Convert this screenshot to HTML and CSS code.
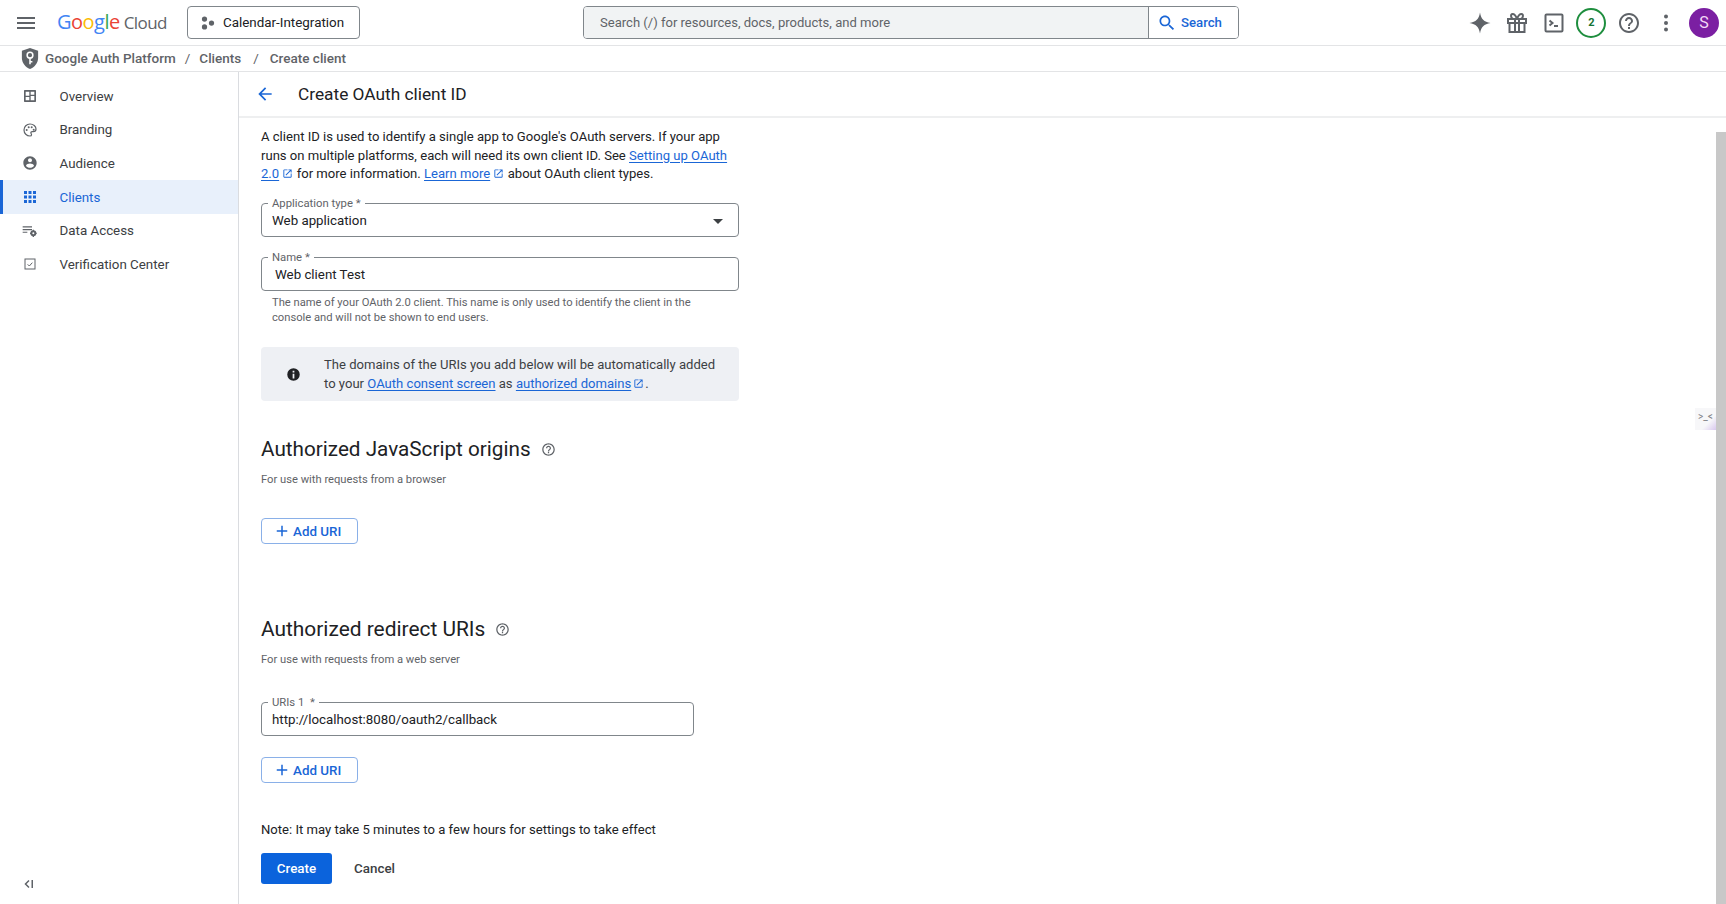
FILE: index.html
```html
<!DOCTYPE html>
<html lang="en">
<head>
<meta charset="utf-8">
<title>Create OAuth client ID</title>
<link rel="stylesheet" href="styles.css">
</head>
<body>
<svg class="defs" width="0" height="0" aria-hidden="true">
  <symbol id="i-open" viewBox="0 0 24 24"><path d="M19 19H5V5h7V3H5c-1.11 0-2 .9-2 2v14c0 1.1.89 2 2 2h14c1.1 0 2-.9 2-2v-7h-2v7zM14 3v2h3.59l-9.83 9.83 1.41 1.41L19 6.41V10h2V3h-7z"/></symbol>
  <symbol id="i-help" viewBox="0 0 24 24"><path d="M11 18h2v-2h-2v2zm1-16C6.48 2 2 6.48 2 12s4.48 10 10 10 10-4.48 10-10S17.52 2 12 2zm0 18c-4.41 0-8-3.59-8-8s3.59-8 8-8 8 3.59 8 8-3.59 8-8 8zm0-14c-2.21 0-4 1.79-4 4h2c0-1.1.9-2 2-2s2 .9 2 2c0 2-3 1.75-3 5h2c0-2.25 3-2.5 3-5 0-2.21-1.79-4-4-4z"/></symbol>
  <symbol id="i-plus" viewBox="0 0 24 24"><path d="M19 13h-6v6h-2v-6H5v-2h6V5h2v6h6v2z"/></symbol>
</svg>

<header class="topbar">
  <svg class="ic ic-menu" viewBox="0 0 24 24"><path d="M3 18h18v-2H3v2zm0-5h18v-2H3v2zm0-7v2h18V6H3z"/></svg>
  <div class="logo"><span class="lb">G</span><span class="lr">o</span><span class="ly">o</span><span class="lb">g</span><span class="lg">l</span><span class="lr">e</span><span class="cloud">Cloud</span></div>
  <button class="project">
    <svg class="ic-proj" viewBox="0 0 16 16"><circle cx="4" cy="3.500" r="3"/><circle cx="12" cy="8" r="3"/><circle cx="4" cy="12.500" r="3"/></svg>
    <span>Calendar-Integration</span>
  </button>
  <div class="search">
    <div class="search-input">Search (/) for resources, docs, products, and more</div>
    <button class="search-btn">
      <svg viewBox="0 0 24 24"><path d="M15.5 14h-.79l-.28-.27C15.41 12.59 16 11.11 16 9.5 16 5.91 13.09 3 9.5 3S3 5.91 3 9.5 5.91 16 9.5 16c1.61 0 3.09-.59 4.23-1.57l.27.28v.79l5 4.99L20.49 19l-4.99-5zm-6 0C7.01 14 5 11.99 5 9.5S7.01 5 9.5 5 14 7.01 14 9.5 11.99 14 9.5 14z"/></svg>
      <span>Search</span>
    </button>
  </div>
  <div class="tools">
    <svg class="tool" viewBox="0 0 24 24"><path d="M12 1.500C13 8 16 11 22.500 12 16 13 13 16 12 22.500 11 16 8 13 1.500 12 8 11 11 8 12 1.500Z"/></svg>
    <svg class="tool tool-line" viewBox="0 0 24 24"><path d="M3 8h18v4H3zM4.500 12v9h15v-9M10 8v13M14 8v13M12 8c-1-3-2.500-5-4.500-5C5.500 3 5.500 7 8 8M12 8c1-3 2.500-5 4.500-5 2 0 2 4-.5 5"/></svg>
    <svg class="tool tool-line" viewBox="0 0 24 24"><rect x="3.500" y="3.500" width="17" height="17" rx="1"/><path d="M7.500 9.500l3 2.500-3 2.500M12 15h4"/></svg>
    <div class="badge">2</div>
    <svg class="tool" viewBox="0 0 24 24"><use href="#i-help"/></svg>
    <svg class="tool" viewBox="0 0 24 24"><circle cx="12" cy="5.500" r="2"/><circle cx="12" cy="12" r="2"/><circle cx="12" cy="18.500" r="2"/></svg>
    <div class="avatar">S</div>
  </div>
</header>

<nav class="crumbs">
  <svg class="shield" viewBox="0 0 18 22"><path d="M9 0l8.500 3v7.500c0 5-3.500 9.500-8.500 11.500C4 20 .5 15.500.5 10.500V3z" fill="#5f6368"/><circle cx="9" cy="7.500" r="3" fill="none" stroke="#fff" stroke-width="1.600"/><path d="M9 10.500V17M9 14.500h2.500" fill="none" stroke="#fff" stroke-width="1.600"/></svg>
  <span class="crumb crumb-first">Google Auth Platform</span>
  <span class="sep sep-first">/</span>
  <span class="crumb">Clients</span>
  <span class="sep sep-second">/</span>
  <span class="crumb">Create client</span>
</nav>

<div class="layout">
  <aside class="side">
    <ul class="side-list">
      <li class="side-item">
        <svg class="side-ic" viewBox="0 0 24 24"><path d="M4 3h16a1 1 0 0 1 1 1v16a1 1 0 0 1-1 1H4a1 1 0 0 1-1-1V4a1 1 0 0 1 1-1zm1.500 2.500v6h5.500v-6zm7.500 0V10h5.500V5.500zm0 6.500v6.500h5.500V12zm-7.500 1.500v5h5.500v-5z" fill-rule="evenodd"/></svg>
        <span>Overview</span>
      </li>
      <li class="side-item">
        <svg class="side-ic" viewBox="0 0 24 24"><path d="M12 3c-5 0-9 4-9 9s4 9 9 9c1.500 0 2.300-1 2.300-2 0-1.200-1-1.500-1-2.700 0-1 .8-1.800 1.800-1.800H17c2.500 0 4-1.800 4-4 0-4.300-4-7.500-9-7.500z" fill="none" stroke="#5f6368" stroke-width="1.800"/><circle cx="7" cy="12" r="1.500"/><circle cx="10" cy="8" r="1.500"/><circle cx="14.500" cy="8" r="1.500"/><circle cx="17.500" cy="11.500" r="1.500"/></svg>
        <span>Branding</span>
      </li>
      <li class="side-item">
        <svg class="side-ic" viewBox="0 0 24 24"><path d="M12 2C6.480 2 2 6.480 2 12s4.480 10 10 10 10-4.480 10-10S17.520 2 12 2zm0 3c1.660 0 3 1.340 3 3s-1.340 3-3 3-3-1.340-3-3 1.340-3 3-3zm0 14.200c-2.500 0-4.710-1.280-6-3.220.03-1.990 4-3.080 6-3.080 1.990 0 5.970 1.090 6 3.080-1.290 1.940-3.500 3.220-6 3.220z"/></svg>
        <span>Audience</span>
      </li>
      <li class="side-item side-item-active">
        <svg class="side-ic" viewBox="0 0 24 24"><path d="M3 3h4.500v4.500H3zM9.750 3h4.500v4.500h-4.500zM16.500 3H21v4.500h-4.500zM3 9.750h4.500v4.500H3zM9.750 9.750h4.500v4.500h-4.500zM16.500 9.750H21v4.500h-4.500zM3 16.500h4.500V21H3zM9.750 16.500h4.500V21h-4.500zM16.500 16.500H21V21h-4.500z"/></svg>
        <span>Clients</span>
      </li>
      <li class="side-item">
        <svg class="side-ic" viewBox="0 0 24 24"><path d="M1 5h14v1.800H1zM1 9h14v1.800H1zM1 13h7v1.800H1z"/><circle cx="17" cy="15.500" r="3" fill="none" stroke="#5f6368" stroke-width="3"/><path d="M16 10h2v2h-2zM16 19h2v2h-2zM12 14.500h2v2h-2zM20 14.500h2v2h-2z"/></svg>
        <span>Data Access</span>
      </li>
      <li class="side-item">
        <svg class="side-ic" viewBox="0 0 24 24"><rect x="4.500" y="4.500" width="15" height="15" fill="none" stroke="#5f6368" stroke-width="1.500"/><path d="M8.500 12.500l2.500 2.500 4.500-5" fill="none" stroke="#5f6368" stroke-width="1.500"/></svg>
        <span>Verification Center</span>
      </li>
    </ul>
    <svg class="collapse" viewBox="0 0 12 12"><path d="M6 2.500L2.500 6 6 9.500M9.250 2v8" fill="none" stroke="#5f6368" stroke-width="1.500"/></svg>
  </aside>

  <main class="main">
    <div class="page-head">
      <svg class="back" viewBox="0 0 24 24"><path d="M20 11H7.830l5.590-5.590L12 4l-8 8 8 8 1.410-1.410L7.830 13H20v-2z"/></svg>
      <h1 class="page-title">Create OAuth client ID</h1>
    </div>
    <div class="page-body">
      <div class="content">
        <p class="intro">A client ID is used to identify a single app to Google's OAuth servers. If your app runs on multiple platforms, each will need its own client ID. See <a class="link">Setting up OAuth 2.0</a> <svg class="ext"><use href="#i-open"/></svg> for more information. <a class="link">Learn more</a> <svg class="ext"><use href="#i-open"/></svg> about OAuth client types.</p>

        <div class="field field-select">
          <label class="field-label">Application type *</label>
          <span class="field-value">Web application</span>
          <span class="caret"></span>
        </div>

        <div class="field field-name">
          <label class="field-label">Name *</label>
          <span class="field-value field-value-inset">Web client Test</span>
        </div>
        <p class="hint">The name of your OAuth 2.0 client. This name is only used to identify the client in the console and will not be shown to end users.</p>

        <div class="notice">
          <svg class="notice-ic" viewBox="0 0 24 24"><path d="M12 2a10 10 0 1 0 0 20 10 10 0 0 0 0-20zm-1.400 3.800h2.800v3h-2.800zm0 5h2.800v7.400h-2.800z" fill-rule="evenodd"/></svg>
          <p class="notice-text">The domains of the URIs you add below will be automatically added to your <a class="link">OAuth consent screen</a> as <a class="link">authorized domains</a><svg class="ext ext-tight"><use href="#i-open"/></svg>.</p>
        </div>

        <section class="sec sec-origins">
          <h2 class="sec-title">Authorized JavaScript origins<svg class="sec-help"><use href="#i-help"/></svg></h2>
          <p class="sec-sub">For use with requests from a browser</p>
          <button class="add-btn add-origins"><svg><use href="#i-plus"/></svg>Add URI</button>
        </section>

        <section class="sec sec-redirect">
          <h2 class="sec-title sec-title-wide">Authorized redirect URIs<svg class="sec-help"><use href="#i-help"/></svg></h2>
          <p class="sec-sub">For use with requests from a web server</p>
          <div class="field field-uri">
            <label class="field-label">URIs 1 &nbsp;*</label>
            <span class="field-value">http://localhost:8080/oauth2/callback</span>
          </div>
          <button class="add-btn add-redirect"><svg><use href="#i-plus"/></svg>Add URI</button>
        </section>

        <p class="note">Note: It may take 5 minutes to a few hours for settings to take effect</p>
        <div class="actions">
          <button class="btn-create">Create</button>
          <button class="btn-cancel">Cancel</button>
        </div>
      </div>
      <div class="scrollbar"></div>
      <div class="widget"><span>&gt;_&lt;</span></div>
    </div>
  </main>
</div>
</body>
</html>
```

FILE: styles.css
```css
* { box-sizing: border-box; }
html, body { margin: 0; height: 904px; overflow: hidden; background: #fff; }
body { font-family: Roboto, "Liberation Sans", sans-serif; color: #202124; font-size: 13px; }
button { font-family: inherit; cursor: pointer; }
p, h1, h2, ul { margin: 0; padding: 0; }
.defs { position: absolute; }

.topbar { height: 46px; border-bottom: 1px solid #e3e4e6; display: flex; align-items: center; padding-left: 14px; }
.ic { width: 24px; height: 24px; fill: #5f6368; flex: none; }
.logo { margin-left: 19px; padding-bottom: 2px; font-family: "Open Sans", sans-serif; font-size: 20px; letter-spacing: -0.5px; width: 130px; flex: none; white-space: nowrap; }
.lb { color: #4285f4; } .lr { color: #ea4335; } .ly { color: #fbbc05; } .lg { color: #34a853; }
.cloud { color: #5f6368; margin-left: 4px; font-size: 17px; letter-spacing: -0.6px; }
.project { width: 173px; height: 33px; flex: none; background: #fff; border: 1px solid #80868b; border-radius: 4px; display: flex; align-items: center; padding: 0 0 0 13px; gap: 8px; font-size: 13.400px; color: #202124; }
.ic-proj { width: 14px; height: 14px; fill: #5f6368; flex: none; }
.search { margin-left: 223px; width: 656px; height: 33px; flex: none; display: flex; border: 1px solid #80868b; border-radius: 4px; overflow: hidden; }
.search-input { flex: 1; background: #f1f3f4; color: #5f6368; font-size: 13.050px; display: flex; align-items: center; padding-left: 16px; border-right: 1px solid #80868b; }
.search-btn { width: 89px; flex: none; border: 0; background: #fff; color: #1a66d6; display: flex; align-items: center; padding: 0 0 0 8px; gap: 4px; font-size: 13.200px; font-weight: 500; }
.search-btn svg { width: 20px; height: 20px; fill: #1a66d6; }
.tools { margin-left: auto; display: flex; align-items: center; gap: 13.300px; padding-right: 7px; }
.tool { width: 24px; height: 24px; fill: #5f6368; flex: none; }
.tool-line { fill: none; stroke: #5f6368; stroke-width: 2; }
.badge { width: 30px; height: 30px; margin: 0 -3px; border: 2px solid #1e8e3e; border-radius: 50%; display: flex; align-items: center; justify-content: center; font-size: 11px; font-weight: 700; color: #137333; }
.avatar { width: 30px; height: 30px; margin-left: -2.300px; border-radius: 50%; background: #7b1fa2; color: #f3d9f7; display: flex; align-items: center; justify-content: center; font-size: 16px; }

.crumbs { height: 26px; border-bottom: 1px solid #e3e4e6; display: flex; align-items: center; padding: 0 0 1px 21px; color: #5f6368; font-size: 13.500px; font-weight: 500; }
.shield { width: 18px; height: 21px; flex: none; }
.crumb-first { margin-left: 6px; }
.sep { font-weight: 400; }
.sep-first { margin: 0 9px 0 9px; }
.sep-second { margin: 0 11px 0 12px; }

.layout { display: flex; height: 832px; }
.side { width: 239px; flex: none; border-right: 1px solid #dadce0; display: flex; flex-direction: column; padding-top: 7.500px; }
.side-list { list-style: none; flex: 1; }
.side-item { height: 33.600px; display: flex; align-items: center; padding-left: 22px; color: #3c4043; font-size: 13.350px; }
.side-item span { margin-left: 21.500px; }
.side-ic { width: 16px; height: 16px; fill: #5f6368; flex: none; }
.side-item-active { background: #e8f0fb; color: #1a66d6; box-shadow: inset 3px 0 0 #1a66d6; }
.side-item-active .side-ic { fill: #1a66d6; }
.collapse { width: 12px; height: 12px; margin: 0 0 14px 23px; flex: none; }

.main { flex: 1; min-width: 0; display: flex; flex-direction: column; position: relative; }
.page-head { height: 46px; flex: none; border-bottom: 2px solid #eeeff0; display: flex; align-items: center; padding-left: 16px; }
.back { width: 20px; height: 20px; fill: #1a66d6; flex: none; }
.page-title { margin-left: 23px; font-size: 17.300px; font-weight: 400; color: #202124; }
.page-body { flex: 1; display: flex; min-height: 0; }
.content { flex: 1; padding: 10px 0 0 22px; }
.scrollbar { width: 10px; flex: none; margin-top: 14px; background: #c8c8c8; }
.widget { position: absolute; right: 10px; top: 336px; width: 21px; height: 22px; padding-bottom: 5px; background: linear-gradient(135deg, #f7f7f9 65%, #d9c8ef); color: #7d8085; font-size: 10px; display: flex; align-items: center; justify-content: center; }

.intro { width: 480px; font-size: 13.080px; line-height: 18.500px; color: #202124; }
.link { color: #1a66d6; text-decoration: underline; text-underline-offset: 2px; }
.ext { width: 11px; height: 11px; fill: #1a66d6; vertical-align: -1px; }
.ext-tight { margin: 0 1px 0 2px; }

.field { position: relative; border: 1px solid #80868b; border-radius: 4px; width: 478px; display: flex; align-items: center; padding-left: 10px; font-size: 13.300px; color: #202124; }
.field-label { position: absolute; left: 6px; top: -7px; background: #fff; padding: 0 4px; line-height: 13px; font-size: 11.300px; color: #5f6368; }
.field-select { height: 34px; margin-top: 19.500px; }
.field-name { height: 34px; margin-top: 20px; }
.field-value-inset { padding-left: 3px; }
.caret { position: absolute; right: 15px; top: 15px; width: 0; height: 0; border-left: 5px solid transparent; border-right: 5px solid transparent; border-top: 5px solid #3c4043; }
.hint { width: 440px; margin: 4px 0 0 11px; font-size: 11.200px; line-height: 15px; color: #5f6368; }

.notice { width: 478px; height: 54px; margin-top: 22px; background: #eef0f4; border-radius: 4px; display: flex; align-items: center; padding-left: 25px; }
.notice-ic { width: 15px; height: 15px; fill: #202124; flex: none; }
.notice-text { margin-left: 23px; width: 400px; padding-top: 1px; font-size: 13.080px; line-height: 18.500px; color: #3c4043; }

.sec-title { font-size: 20.700px; font-weight: 400; color: #202124; line-height: 26px; display: flex; align-items: center; }
.sec-title-wide { font-size: 20.900px; }
.sec-help { width: 15px; height: 15px; fill: #5f6368; margin-left: 10px; }
.sec-sub { font-size: 11.200px; line-height: 15px; color: #5f6368; margin-top: 10px; }
.sec-origins { margin-top: 35px; }
.sec-redirect { margin-top: 72px; }

.add-btn { width: 97px; height: 26px; display: flex; align-items: center; padding: 0 0 0 11px; gap: 2px; background: #fff; border: 1px solid #8ab0e8; border-radius: 4px; color: #1a66d6; font-size: 13.400px; font-weight: 500; }
.add-btn svg { width: 18px; height: 18px; fill: #1a66d6; flex: none; }
.add-origins { margin-top: 31px; }
.add-redirect { margin-top: 21px; }
.field-uri { width: 433px; height: 34px; margin-top: 35px; }

.note { margin-top: 38px; font-size: 13.080px; line-height: 18px; color: #202124; }
.actions { display: flex; align-items: center; margin-top: 14px; }
.btn-create { width: 71px; height: 31px; border: 0; border-radius: 3px; background: #0b63dc; color: #fff; font-size: 13.400px; font-weight: 500; }
.btn-cancel { margin-left: 22px; padding: 0; border: 0; background: none; color: #3c4043; font-size: 13.400px; font-weight: 500; }
```
